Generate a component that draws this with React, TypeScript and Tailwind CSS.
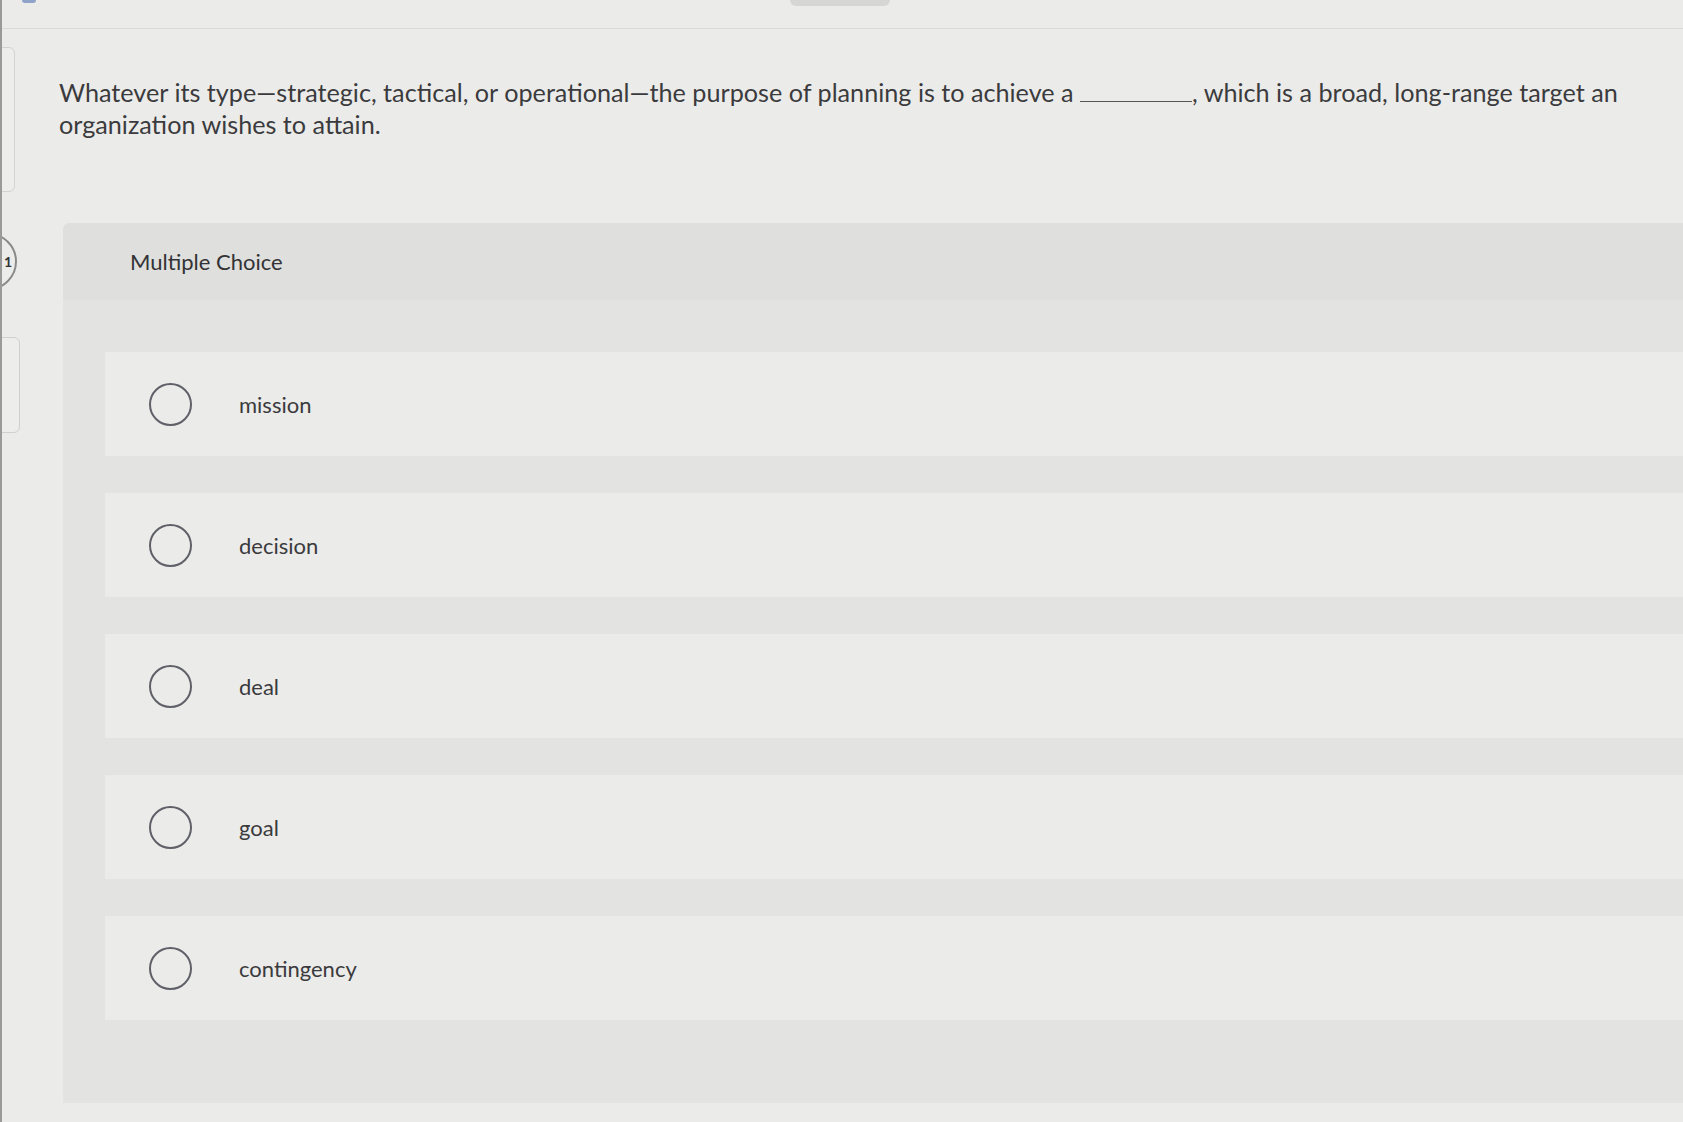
const OPTIONS = ['mission', 'decision', 'deal', 'goal', 'contingency']

function OptionRow({ label }: { label: string }) {
  return (
    <div className="h-[104px] bg-[#ebebe9] flex items-center pl-[44px]">
      <span className="w-[43px] h-[43px] rounded-full border-2 border-[#5f6068] shrink-0" />
      <span className="ml-[47px] text-[22px] text-[#3a3a3d]">{label}</span>
    </div>
  )
}

export default function App() {
  return (
    <div className="w-[1683px] h-[1122px] overflow-hidden bg-[#ebebe9] flex flex-col border-l-2 border-[#9a9a98] font-['Lato','Open_Sans',sans-serif]">
      {/* top bar */}
      <div className="h-[29px] shrink-0 border-b border-[#dadad8] flex">
        <div className="ml-[20px] w-[14px] h-[3px] rounded-b-full bg-[#8fa3c8]" />
        <div className="ml-[754px] w-[100px] h-[6px] rounded-b-xl bg-[#d6d6d4]" />
      </div>

      <div className="flex flex-1">
        {/* cut-off side rail */}
        <aside className="w-[16px] shrink-0 flex flex-col">
          <div className="mt-[18px] ml-[-27px] w-[40px] h-[145px] rounded-md border border-[#d3d3d1] bg-[#ededeb]" />
          <div className="mt-[41px] ml-[-42px] w-[57px] h-[57px] rounded-full border-2 border-[#8a8a88] bg-[#ececea] flex items-center justify-end pr-[3px] text-[14px] font-bold text-[#333]">
            1
          </div>
          <div className="mt-[47px] ml-[-22px] w-[40px] h-[96px] rounded-md border border-[#d0d0ce] bg-[#ededeb]" />
        </aside>

        <main className="flex-1 flex flex-col min-w-0">
          <p className="mt-[47px] ml-[41px] w-[1600px] text-[25.2px] leading-[32px] text-[#3b3b3e]">
            Whatever its type—strategic, tactical, or operational—the purpose of planning is to achieve a{' '}
            <span className="inline-block w-[112px] h-[1px] border-b border-[#55555a] align-baseline" />, which is a
            broad, long-range target an organization wishes to attain.
          </p>

          <section className="mt-[83px] ml-[45px] rounded-tl-md overflow-hidden flex flex-col">
            <div className="h-[77px] bg-[#dfdfdd] flex items-center pl-[67px]">
              <span className="text-[22px] text-[#333336]">Multiple Choice</span>
            </div>
            <div className="bg-[#e3e3e1] pt-[52px] pb-[83px] pl-[42px] flex flex-col gap-[37px]">
              {OPTIONS.map((o) => (
                <OptionRow key={o} label={o} />
              ))}
            </div>
          </section>
        </main>
      </div>
    </div>
  )
}
